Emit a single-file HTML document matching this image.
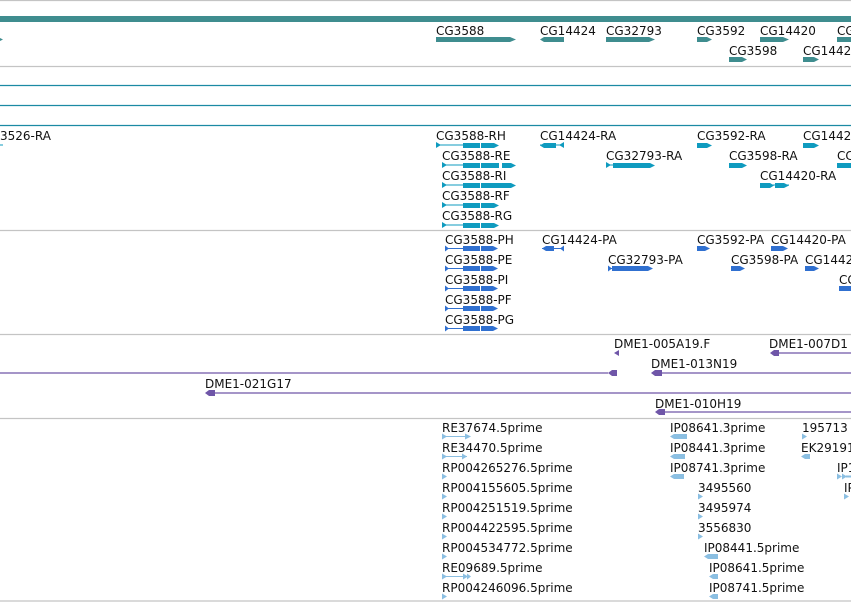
<!DOCTYPE html>
<html><head><meta charset="utf-8"><style>
html,body{margin:0;padding:0;background:#fff;width:851px;height:602px;overflow:hidden}
svg{position:absolute;left:0;top:0}
text{font-family:"DejaVu Sans","Liberation Sans",sans-serif;font-size:12px;fill:#111}
</style></head><body>
<svg width="851" height="602" viewBox="0 0 851 602" xmlns="http://www.w3.org/2000/svg">
<!-- separators -->
<g stroke="#c4c4c4" stroke-width="1.2">
<line x1="0" y1="0.5" x2="851" y2="0.5"/>
<line x1="0" y1="66.5" x2="851" y2="66.5"/>
<line x1="0" y1="230.5" x2="851" y2="230.5"/>
<line x1="0" y1="334.5" x2="851" y2="334.5"/>
<line x1="0" y1="418.5" x2="851" y2="418.5"/>
<line x1="0" y1="601" x2="851" y2="601"/>
</g>
<g stroke="#1b8aa3" stroke-width="1.2">
<line x1="0" y1="85.5" x2="851" y2="85.5"/>
<line x1="0" y1="105.5" x2="851" y2="105.5"/>
<line x1="0" y1="125.5" x2="851" y2="125.5"/>
</g>
<rect x="0" y="16" width="851" height="6" fill="#3f8d8f"/>

<!-- gene track -->
<g fill="#3f8d8f">
<polygon points="436,37 510,37 516,39.5 510,42 436,42"/>
<polygon points="540,39.5 544,37 564,37 564,42 544,42"/>
<polygon points="606,37 649,37 655,39.5 649,42 606,42"/>
<polygon points="697,37 707,37 712,39.5 707,42 697,42"/>
<polygon points="760,37 783,37 789,39.5 783,42 760,42"/>
<polygon points="729,57 742,57 747,59.5 742,62 729,62"/>
<polygon points="803,57 814,57 819,59.5 814,62 803,62"/>
<rect x="837" y="37" width="14" height="5"/>
<polygon points="0,38 3,39.5 0,41"/>
</g>
<text x="436" y="35">CG3588</text><text x="540" y="35">CG14424</text><text x="606" y="35">CG32793</text>
<text x="697" y="35">CG3592</text><text x="760" y="35">CG14420</text><text x="837" y="35">CG</text>
<text x="729" y="55">CG3598</text><text x="803" y="55">CG1442</text>

<!-- transcripts -->
<g fill="#0f9bbf" stroke="#0f9bbf">
<g stroke-width="1"><line x1="436" y1="145" x2="463" y2="145"/><line x1="442" y1="165" x2="463" y2="165"/><line x1="442" y1="185" x2="463" y2="185"/><line x1="442" y1="205" x2="463" y2="205"/><line x1="442" y1="225" x2="463" y2="225"/><line x1="540" y1="145" x2="564" y2="145"/><line x1="760" y1="185" x2="789" y2="185"/><line x1="606" y1="165" x2="613" y2="165"/><line x1="0" y1="145" x2="3" y2="145"/></g>
<g stroke="none">
<polygon points="436,142 441,145 436,148"/><polygon points="442,162 447,165 442,168"/><polygon points="442,182 447,185 442,188"/><polygon points="442,202 447,205 442,208"/><polygon points="442,222 447,225 442,228"/>
<rect x="463" y="143" width="17" height="5"/><polygon points="481,143 494,143 499,145.5 494,148 481,148"/>
<rect x="463" y="163" width="17" height="5"/><rect x="481" y="163" width="18" height="5"/><polygon points="502,163 511,163 516,165.5 511,168 502,168"/>
<rect x="463" y="183" width="17" height="5"/><polygon points="481,183 511,183 516,185.5 511,188 481,188"/>
<rect x="463" y="203" width="17" height="5"/><polygon points="481,203 494,203 499,205.5 494,208 481,208"/>
<rect x="463" y="223" width="17" height="5"/><polygon points="481,223 494,223 499,225.5 494,228 481,228"/>
<polygon points="540,145.5 544,143 556,143 556,148 544,148"/><polygon points="564,142 559,145 564,148"/>
<polygon points="606,162 611,165 606,168"/><polygon points="613,163 650,163 655,165.5 650,168 613,168"/>
<polygon points="697,143 707,143 712,145.5 707,148 697,148"/>
<polygon points="729,163 742,163 747,165.5 742,168 729,168"/>
<polygon points="760,183 770,183 774,185.5 770,188 760,188"/><polygon points="775,183 784,183 789,185.5 784,188 775,188"/>
<polygon points="803,143 814,143 819,145.5 814,148 803,148"/>
<rect x="837" y="163" width="14" height="5"/>
</g></g>
<text x="0" y="140">3526-RA</text>
<text x="436" y="140">CG3588-RH</text><text x="540" y="140">CG14424-RA</text><text x="697" y="140">CG3592-RA</text><text x="803" y="140">CG1442</text>
<text x="442" y="160">CG3588-RE</text><text x="606" y="160">CG32793-RA</text><text x="729" y="160">CG3598-RA</text><text x="837" y="160">CC</text>
<text x="442" y="180">CG3588-RI</text><text x="760" y="180">CG14420-RA</text>
<text x="442" y="200">CG3588-RF</text>
<text x="442" y="220">CG3588-RG</text>

<!-- proteins -->
<g fill="#3070d0" stroke="#3070d0">
<g stroke-width="1"><line x1="445" y1="248.5" x2="463" y2="248.5"/><line x1="445" y1="268.5" x2="463" y2="268.5"/><line x1="445" y1="288.5" x2="463" y2="288.5"/><line x1="445" y1="308.5" x2="463" y2="308.5"/><line x1="445" y1="328.5" x2="463" y2="328.5"/><line x1="542" y1="248.5" x2="564" y2="248.5"/><line x1="608" y1="268.5" x2="612" y2="268.5"/></g>
<g stroke="none">
<polygon points="445,245.5 449,248.5 445,251.5"/><polygon points="445,265.5 449,268.5 445,271.5"/><polygon points="445,285.5 449,288.5 445,291.5"/><polygon points="445,305.5 449,308.5 445,311.5"/><polygon points="445,325.5 449,328.5 445,331.5"/>
<rect x="463" y="246" width="17" height="5"/><polygon points="481,246 493,246 498,248.5 493,251 481,251"/>
<rect x="463" y="266" width="17" height="5"/><polygon points="481,266 493,266 498,268.5 493,271 481,271"/>
<rect x="463" y="286" width="17" height="5"/><polygon points="481,286 493,286 498,288.5 493,291 481,291"/>
<rect x="463" y="306" width="17" height="5"/><polygon points="481,306 493,306 498,308.5 493,311 481,311"/>
<rect x="463" y="326" width="17" height="5"/><polygon points="481,326 493,326 498,328.5 493,331 481,331"/>
<polygon points="542,248.5 546,246 554,246 554,251 546,251"/><polygon points="564,245.5 560,248.5 564,251.5"/>
<polygon points="608,265.5 612,268.5 608,271.5"/><polygon points="612,266 648,266 653,268.5 648,271 612,271"/>
<polygon points="697,246 705,246 710,248.5 705,251 697,251"/>
<polygon points="771,246 783,246 788,248.5 783,251 771,251"/>
<polygon points="731,266 740,266 745,268.5 740,271 731,271"/>
<polygon points="805,266 814,266 819,268.5 814,271 805,271"/>
<rect x="839" y="286" width="12" height="5"/>
</g></g>
<text x="445" y="244">CG3588-PH</text><text x="542" y="244">CG14424-PA</text><text x="697" y="244">CG3592-PA</text><text x="771" y="244">CG14420-PA</text>
<text x="445" y="264">CG3588-PE</text><text x="608" y="264">CG32793-PA</text><text x="731" y="264">CG3598-PA</text><text x="805" y="264">CG1442</text>
<text x="445" y="284">CG3588-PI</text><text x="839" y="284">CG</text>
<text x="445" y="304">CG3588-PF</text>
<text x="445" y="324">CG3588-PG</text>

<!-- BACs -->
<g fill="#6f56a8" stroke="#6f56a8">
<g stroke-width="1.2"><line x1="779" y1="353" x2="851" y2="353"/><line x1="0" y1="373" x2="608" y2="373"/><line x1="662" y1="373" x2="851" y2="373"/><line x1="215" y1="393" x2="851" y2="393"/><line x1="665" y1="412" x2="851" y2="412"/></g>
<g stroke="none">
<polygon points="614,353 619,350 619,356"/>
<polygon points="770,353 774,350 779,350 779,356 774,356"/>
<polygon points="608,373 612,370 617,370 617,376 612,376"/>
<polygon points="651,373 655,370 662,370 662,376 655,376"/>
<polygon points="205,393 209,390 215,390 215,396 209,396"/>
<polygon points="655,412 659,409 665,409 665,415 659,415"/>
</g></g>
<text x="614" y="348">DME1-005A19.F</text><text x="769" y="348">DME1-007D1</text>
<text x="651" y="368">DME1-013N19</text>
<text x="205" y="388">DME1-021G17</text>
<text x="655" y="408">DME1-010H19</text>

<!-- ESTs -->
<g fill="#8bbfe2" stroke="#8bbfe2">
<g stroke-width="1"><line x1="442" y1="436.5" x2="466" y2="436.5"/><line x1="442" y1="456.5" x2="467" y2="456.5"/><line x1="442" y1="576.5" x2="465" y2="576.5"/></g>
<g stroke="none">
<polygon points="442,433.5 447,436.5 442,439.5"/><polygon points="465,433.5 471,436.5 465,439.5"/>
<polygon points="442,453.5 447,456.5 442,459.5"/><polygon points="462,453.5 467,456.5 462,459.5"/>
<polygon points="442,473.5 447,476.5 442,479.5"/><polygon points="442,493.5 447,496.5 442,499.5"/><polygon points="442,513.5 447,516.5 442,519.5"/><polygon points="442,533.5 447,536.5 442,539.5"/><polygon points="442,553.5 447,556.5 442,559.5"/>
<polygon points="442,573.5 447,576.5 442,579.5"/><polygon points="463,573.5 468,576.5 463,579.5"/><polygon points="467,573.5 471,576.5 467,579.5"/>
<polygon points="442,593.5 447,596.5 442,599.5"/>
<polygon points="670,436.5 674,434 687,434 687,439 674,439"/>
<polygon points="670,456.5 674,454 685,454 685,459 674,459"/>
<polygon points="670,476.5 674,474 684,474 684,479 674,479"/>
<polygon points="698,493.5 703,496.5 698,499.5"/><polygon points="698,513.5 703,516.5 698,519.5"/><polygon points="698,533.5 703,536.5 698,539.5"/>
<polygon points="704,556.5 708,554 718,554 718,559 708,559"/>
<polygon points="709,576.5 713,574 718,574 718,579 713,579"/>
<polygon points="709,596.5 713,594 718,594 718,599 713,599"/>
<polygon points="802,433.5 807,436.5 802,439.5"/>
<polygon points="801,456.5 805,454 810,454 810,459 805,459"/>
<polygon points="837,473.5 842,476.5 837,479.5"/><polygon points="842,473.5 847,476.5 842,479.5"/><rect x="846" y="475.5" width="5" height="2"/>
<polygon points="844,493.5 849,496.5 844,499.5"/>
</g></g>
<text x="442" y="432">RE37674.5prime</text><text x="442" y="452">RE34470.5prime</text><text x="442" y="472">RP004265276.5prime</text><text x="442" y="492">RP004155605.5prime</text><text x="442" y="512">RP004251519.5prime</text><text x="442" y="532">RP004422595.5prime</text><text x="442" y="552">RP004534772.5prime</text><text x="442" y="572">RE09689.5prime</text><text x="442" y="592">RP004246096.5prime</text>
<text x="670" y="432">IP08641.3prime</text><text x="670" y="452">IP08441.3prime</text><text x="670" y="472">IP08741.3prime</text>
<text x="698" y="492">3495560</text><text x="698" y="512">3495974</text><text x="698" y="532">3556830</text>
<text x="704" y="552">IP08441.5prime</text><text x="709" y="572">IP08641.5prime</text><text x="709" y="592">IP08741.5prime</text>
<text x="802" y="432">195713</text><text x="801" y="452">EK29191</text><text x="837" y="472">IP1</text><text x="844" y="492">IP</text>
</svg>
</body></html>
